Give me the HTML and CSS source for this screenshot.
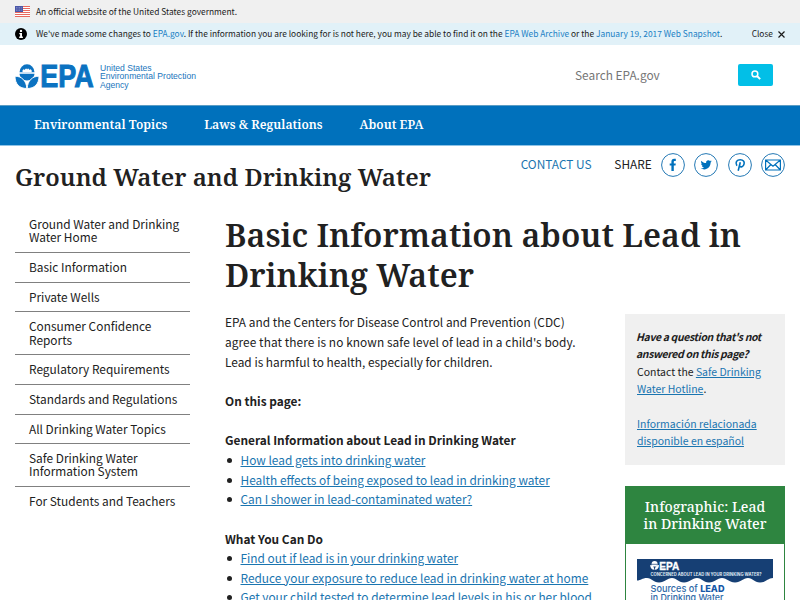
FILE: index.html
```
<!DOCTYPE html>
<html lang="en">
<head>
<meta charset="utf-8">
<title>Basic Information about Lead in Drinking Water</title>
<link rel="stylesheet" href="styles.css">
</head>
<body>
<div class="official">
  <svg class="flag" width="15" height="11" viewBox="0 0 15 11"><rect width="15" height="11" fill="#fff"/><path d="M0 .5h15M0 2.5h15M0 4.5h15M0 6.5h15M0 8.5h15M0 10.5h15" stroke="#e8695f"/><rect width="8" height="6" fill="#4a57a8"/><path d="M1 1.5h6.500M1 3h6.500M1 4.500h6.500" stroke="#a9b2dc" stroke-width=".6" stroke-dasharray=".8 .8"/></svg>
  <span>An official website of the United States government.</span>
</div>
<div class="alert">
  <svg class="info" width="12" height="12" viewBox="0 0 12 12"><circle cx="6" cy="6" r="6" fill="#000"/><circle cx="6" cy="2.900" r="1.200" fill="#fff"/><path d="M4.300 5h2.700v3.600h.9v1.300H4.200V8.600h.9V6.200h-.8z" fill="#fff"/></svg>
  <p>We've made some changes to <a href="#">EPA.gov</a>. If the information you are looking for is not here, you may be able to find it on the <a href="#">EPA Web Archive</a> or the <a href="#">January 19, 2017 Web Snapshot</a>.</p>
  <span class="close">Close <svg width="7" height="7" viewBox="0 0 7 7"><path d="M.5.5l6 6M6.500.5l-6 6" stroke="#1b1b1b" stroke-width="1.200"/></svg></span>
</div>
<header class="masthead">
  <svg class="logo" width="79" height="25" viewBox="0 0 79 25">
    <g fill="#0b72c1">
      <path d="M4.500 8.300a7.500 8 0 0 1 15 0z"/>
      <path d="M4.500 9.800h15a7.500 6.800 0 0 1-15 0z"/>
      <path d="M0 12.200c6.500 0 11.400 4.300 11.800 12.300C4.500 24.500 0 20 0 12.200zM24 12.200c-6.500 0-11.400 4.300-11.800 12.300 7.300 0 11.800-4.500 11.800-12.300z" stroke="#fff" stroke-width=".9"/>
    </g>
    <path d="M7.300 7q1.200-3 2.400-1 1.200-2.800 2.400-.6 1.200-2.200 2.400.6 1.200-2 2.400 1l-.5 1.300H7.800z" fill="#fff"/>
    <text class="logo-word" x="25.300" y="23.300" textLength="53.400" lengthAdjust="spacingAndGlyphs">EPA</text>
  </svg>
  <div class="agency">United States<br>Environmental Protection<br>Agency</div>
  <div class="search"><span>Search EPA.gov</span>
    <button aria-label="Search"><svg width="10" height="10" viewBox="0 0 10 10"><circle cx="3.900" cy="3.900" r="2.900" fill="none" stroke="#fff" stroke-width="1.500"/><path d="M6 6l3.200 3.200" stroke="#fff" stroke-width="1.900"/></svg></button>
  </div>
</header>
<nav class="mainnav"><a href="#">Environmental Topics</a><a href="#">Laws &amp; Regulations</a><a href="#">About EPA</a></nav>
<div class="sitebar">
  <h2>Ground Water and Drinking Water</h2>
  <div class="share">
    <a class="contact" href="#">CONTACT US</a><span class="label">SHARE</span>
    <svg width="24" height="24" viewBox="0 0 24 24"><circle class="ring" cx="12" cy="12" r="11.400"/><path class="ink" d="M10.400 18v-5.400H8.700v-2.200h1.700V8.700c0-1.900 1-2.900 2.700-2.900h1.700V8h-1.100c-.7 0-.9.3-.9.900v1.500h2l-.3 2.200h-1.700V18z"/></svg>
    <svg width="24" height="24" viewBox="0 0 24 24"><circle class="ring" cx="12" cy="12" r="11.400"/><path class="ink" d="M17.700 8.300c-.4.200-.8.300-1.300.4.500-.3.800-.7 1-1.200-.5.300-.9.400-1.400.5a2.300 2.300 0 0 0-3.900 2.100c-1.900-.1-3.600-1-4.700-2.400-.6 1.100-.3 2.400.7 3.100-.4 0-.7-.1-1-.3 0 1.100.8 2.100 1.800 2.300-.3.100-.7.100-1 0 .3.900 1.100 1.600 2.100 1.600-1 .8-2.200 1.100-3.400.9 4.500 2.800 10-.1 10-5.700.4-.4.800-.8 1.100-1.300z"/></svg>
    <svg width="24" height="24" viewBox="0 0 24 24"><circle class="ring" cx="12" cy="12" r="11.400"/><path class="line" d="M8.900 12.700C6.700 9.300 9 6.700 12.300 6.700c3 0 4.300 1.900 3.800 4.100-.6 3.100-3.700 3.900-4.500 2.200M12.300 9.300L10.200 17.800"/></svg>
    <svg width="24" height="24" viewBox="0 0 24 24"><circle class="ring" cx="12" cy="12" r="11.400"/><path class="line thin" d="M4.600 7h14.800v10H4.600zM4.600 7l7.400 6.200L19.400 7M4.600 17l5.300-5.500M19.400 17l-5.300-5.500"/></svg>
  </div>
</div>
<div class="columns">
  <ul class="sidenav">
    <li>Ground Water and Drinking Water Home</li>
    <li>Basic Information</li>
    <li>Private Wells</li>
    <li>Consumer Confidence Reports</li>
    <li>Regulatory Requirements</li>
    <li>Standards and Regulations</li>
    <li>All Drinking Water Topics</li>
    <li>Safe Drinking Water Information System</li>
    <li>For Students and Teachers</li>
  </ul>
  <main>
    <h1>Basic Information about Lead in<br>Drinking Water</h1>
    <div class="split">
      <article>
        <p>EPA and the Centers for Disease Control and Prevention (CDC)<br><span class="loose">agree that there is no known safe level of lead in a child's body.</span><br>Lead is harmful to health, especially for children.</p>
        <p class="strong">On this page:</p>
        <h3>General Information about Lead in Drinking Water</h3>
        <ul>
          <li><a href="#">How lead gets into drinking water</a></li>
          <li><a href="#">Health effects of being exposed to lead in drinking water</a></li>
          <li><a href="#">Can I shower in lead-contaminated water?</a></li>
        </ul>
        <h3>What You Can Do</h3>
        <ul>
          <li><a href="#">Find out if lead is in your drinking water</a></li>
          <li><a href="#">Reduce your exposure to reduce lead in drinking water at home</a></li>
          <li><a href="#">Get your child tested to determine lead levels in his or her blood</a></li>
        </ul>
      </article>
      <aside>
        <div class="question">
          <p><em>Have a question that's not<br>answered on this page?</em>Contact the <a href="#">Safe Drinking<br>Water Hotline</a>.</p>
          <p><a href="#">Información relacionada<br>disponible en español</a></p>
        </div>
        <div class="infographic">
          <h2>Infographic: Lead<br>in Drinking Water</h2>
          <svg width="136" height="60" viewBox="0 0 136 60">
            <path d="M0 0h136v19c-5 0-7 4.500-13 4.500s-7-4.500-12-4.500-7 4.500-13 4.500-8-4.500-13-4.500-7 4.500-13 4.500-7-4.500-12-4.500-7 4.500-13 4.500-7-4.500-12-4.500-7 4.500-13 4.500-7-4.500-12-4.500-6 2.500-10 2.500z" fill="#163f74"/>
            <path d="M14.600 5a3 3 0 0 1 6 0 3 2.600 0 0 1-6 0zM13.200 6c2.200 0 4 1.700 4.200 4.800-2.600 0-4.200-1.900-4.200-4.800zM22 6c-2.200 0-4 1.700-4.200 4.800 2.600 0 4.200-1.900 4.200-4.800z" fill="#fff"/><path d="M14.600 5.300h6" stroke="#163f74" stroke-width=".7"/>
            <text class="ig-epa" x="22.300" y="10.900" textLength="20" lengthAdjust="spacingAndGlyphs">EPA</text>
            <text class="ig-small" x="13.500" y="16.800" textLength="111" lengthAdjust="spacingAndGlyphs">CONCERNED ABOUT LEAD IN YOUR DRINKING WATER?</text>
            <text class="ig-head" x="13.500" y="33" textLength="74" lengthAdjust="spacingAndGlyphs">Sources of <tspan class="ig-bold">LEAD</tspan></text>
            <text class="ig-head" x="13.500" y="42" textLength="73" lengthAdjust="spacingAndGlyphs">in Drinking Water</text>
          </svg>
        </div>
      </aside>
    </div>
  </main>
</div>
</body>
</html>
```
FILE: styles.css
```
* { box-sizing: border-box; }
html, body { height: 600px; overflow: hidden; }
body {
  margin: 0;
  background: #fff;
  color: #212121;
  font: 11.89px/19.65px "Noto Sans CJK SC", "Noto Sans", sans-serif;
}
p, h1, h2, h3, ul { margin: 0; padding: 0; }
ul { list-style: none; }
a { color: #1a75b0; }
svg { display: block; flex: none; }

.official {
  display: flex;
  align-items: center;
  gap: 6px;
  height: 23px;
  padding-left: 15px;
  background: #f0f0f0;
  font-size: 8.4px;
}
.alert {
  display: flex;
  align-items: center;
  height: 22px;
  padding: 0 15px;
  background: #e1f1f8;
  font-size: 8.4px;
  white-space: nowrap;
}
.info { margin-right: 9px; }
.alert a { color: #1a7fc4; text-decoration: none; }
.close { display: flex; align-items: center; gap: 5px; margin-left: auto; }

.masthead { display: flex; height: 60px; padding: 19px 15px 0; }
.logo-word { font: bold 30.5px "Liberation Sans", sans-serif; fill: #0b72c1; stroke: #0b72c1; stroke-width: 1px; }
.agency { margin: -.5px 0 0 6px; color: #1a75bc; font: 8.6px/8.8px "Liberation Sans", sans-serif; }
.search { display: flex; align-items: flex-start; margin-left: auto; padding-right: 12px; color: #757575; }
.search span { width: 163px; line-height: 21px; }
.search button {
  display: flex;
  align-items: center;
  justify-content: center;
  width: 35px;
  height: 22px;
  padding: 0;
  border: 0;
  border-radius: 2px;
  background: #02bfe7;
}

.mainnav {
  display: flex;
  gap: 37px;
  height: 41px;
  padding: 9px 0 0 34px;
  border-top: 1px solid #5b9dc4;
  border-bottom: 1px solid #8ec3e6;
  background: #0071bc;
  font: 600 12.23px/20px "Noto Serif", "DejaVu Serif", serif;
}
.mainnav a { color: #fff; text-decoration: none; }

.sitebar { display: flex; justify-content: space-between; height: 63px; padding: 0 15px; }
.sitebar h2 { margin-top: 15px; font: 600 24.2px/32px "Noto Serif", "DejaVu Serif", serif; white-space: nowrap; }
.share { display: flex; align-items: center; gap: 9.300px; height: 24px; margin-top: 7px; }
.contact, .label { margin-top: -2px; }
.contact { margin-right: 13.500px; text-decoration: none; }
.ring { fill: none; stroke: #2378b4; stroke-width: 1; }
.ink { fill: #0071bc; }
.line { fill: none; stroke: #0071bc; stroke-width: 1.600; }
.thin { stroke-width: 1.200; }

.columns { display: flex; gap: 35px; padding: 0 15px; }
.sidenav { width: 175px; margin-top: 1px; line-height: 13.200px; }
.sidenav li { padding: 7.050px 6px 8.450px 14px; border-bottom: 1px solid #808080; }
.sidenav li:last-child { border-bottom: 0; }
main { width: 560px; }
h1 { height: 103px; padding-top: 6px; font: 600 32.3px/39.600px "Noto Serif", "DejaVu Serif", serif; white-space: nowrap; }
.split { display: flex; justify-content: space-between; }
article { width: 372px; padding-top: .35px; white-space: nowrap; }
article p, article ul { margin-bottom: 19.650px; }
.loose { letter-spacing: .07px; }
h3, .strong { font-size: 11.89px; font-weight: 700; }
article li { position: relative; padding-left: 15.500px; }
article li::before {
  content: "";
  position: absolute;
  left: 2px;
  top: 8px;
  width: 5px;
  height: 5px;
  border-radius: 50%;
  background: #212121;
}
aside { width: 160px; padding-top: 2px; }
.question {
  height: 151px;
  padding: 14px 12px;
  background: #f0f0f0;
  font-size: 10.46px;
  line-height: 17.400px;
  white-space: nowrap;
}
.question p + p { margin-top: 17.400px; }
.question em { display: block; font-weight: 700; letter-spacing: -.355px; margin-left: -1px; }
.infographic { height: 300px; margin-top: 21px; border: 1px solid #2e8540; }
.infographic h2 {
  height: 57px;
  padding-top: 11px;
  background: #2e8540;
  color: #fff;
  font: 500 14px/17.400px "Noto Serif", "DejaVu Serif", serif;
  text-align: center;
}
.infographic svg { margin: 15px 0 0 11px; }
.ig-epa { font: bold 11px "Liberation Sans", sans-serif; fill: #fff; stroke: #fff; stroke-width: .3px; }
.ig-small { font: 700 4.200px Inter, sans-serif; fill: #dfe7f1; }
.ig-head { font: 500 9.500px Inter, sans-serif; fill: #2f6aa8; }
.ig-bold { font-weight: 800; fill: #1558a8; }
```
